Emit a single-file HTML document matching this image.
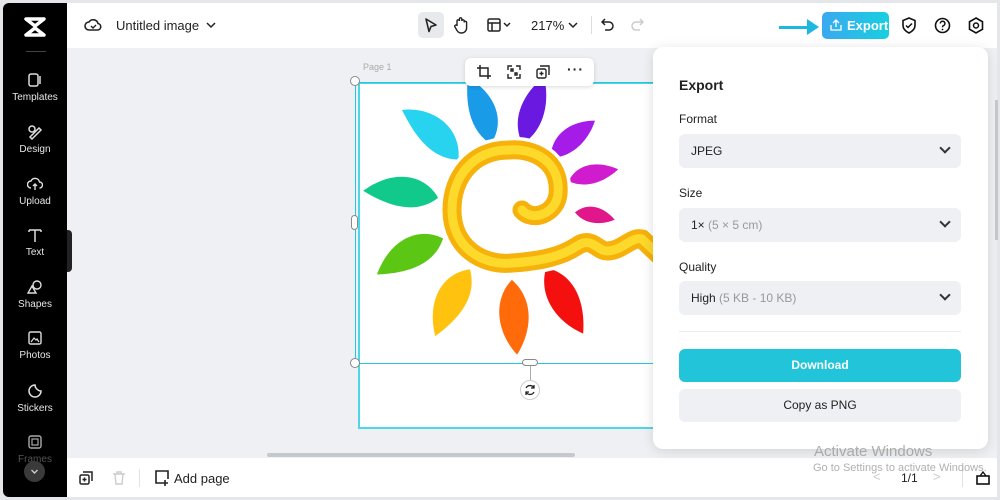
<!DOCTYPE html>
<html><head><meta charset="utf-8"><style>
*{margin:0;padding:0;box-sizing:border-box}
body{width:1000px;height:500px;overflow:hidden;background:#e4e6e9;font-family:"Liberation Sans",sans-serif;position:relative}
.abs{position:absolute}
#side{left:3px;top:3px;width:64px;height:494px;background:#000;border-radius:6px 0 0 6px}
.si{position:absolute;left:0;width:64px;text-align:center;color:#e6e6e6;font-size:10px}
.si svg{display:block;margin:0 auto 4px}
#top{left:67px;top:3px;width:930px;height:45px;background:#fff}
#canvas{left:67px;top:48px;width:930px;height:410px;background:#eef0f3}
#bot{left:67px;top:458px;width:930px;height:39px;background:#fff}
.sel{left:679px;width:282px;height:34px;background:#eef0f3;border-radius:6px;font-size:12px;color:#222;padding:0 12px;line-height:34px}
.sel span{color:#999}
.sel i{position:absolute;right:12px;width:8px;height:8px;border-right:2px solid #333;border-bottom:2px solid #333;transform:rotate(45deg);top:10px}
.lbl{left:679px;font-size:12px;color:#222}
</style></head><body>
<div id="side" class="abs">
 <svg class="abs" style="left:20px;top:13px" width="24" height="22" viewBox="0 0 24 22"><path d="M3 3h18l-9 7z M3 19h18l-9-7z" fill="none" stroke="#fff" stroke-width="3.5" stroke-linejoin="round"/></svg>
 <div class="abs" style="left:23px;top:48px;width:20px;height:1px;background:#444"></div>
 <div class="si" style="top:69px"><svg width="16" height="16"><rect x="2" y="2" width="9" height="12" rx="2" fill="none" stroke="#ddd" stroke-width="1.5"/><path d="M13 4v8" stroke="#ddd" stroke-width="1.5"/></svg>Templates</div>
 <div class="si" style="top:121px"><svg width="16" height="16"><circle cx="5" cy="5" r="3" fill="none" stroke="#ddd" stroke-width="1.5"/><path d="M3 13l9-9 2 2-9 9z" fill="none" stroke="#ddd" stroke-width="1.5"/></svg>Design</div>
 <div class="si" style="top:173px"><svg width="16" height="16"><path d="M4 12a3.5 3.5 0 0 1 0-7 4.5 4.5 0 0 1 8.5 1 3 3 0 0 1 0 6M8 14V8M6 10l2-2 2 2" fill="none" stroke="#ddd" stroke-width="1.4"/></svg>Upload</div>
 <div class="si" style="top:224px"><svg width="16" height="16"><path d="M2 3h12M8 3v12M2 3v2M14 3v2" fill="none" stroke="#ddd" stroke-width="1.5"/></svg>Text</div>
 <div class="si" style="top:276px"><svg width="16" height="16"><circle cx="10" cy="6" r="4" fill="none" stroke="#ddd" stroke-width="1.4"/><path d="M5 7l4 7H1z" fill="none" stroke="#ddd" stroke-width="1.4"/></svg>Shapes</div>
 <div class="si" style="top:327px"><svg width="16" height="16"><rect x="2" y="2" width="12" height="12" rx="1.5" fill="none" stroke="#ddd" stroke-width="1.4"/><path d="M4 12l3-4 2 2 1-1 2 3" fill="none" stroke="#ddd" stroke-width="1.2"/></svg>Photos</div>
 <div class="si" style="top:380px"><svg width="16" height="16"><path d="M14 8a6 6 0 1 1-6-6c0 3 3 6 6 6z" fill="none" stroke="#ddd" stroke-width="1.5"/></svg>Stickers</div>
 <div class="si" style="top:431px;color:#555"><svg width="16" height="16"><rect x="2" y="2" width="12" height="12" rx="2" fill="none" stroke="#aaa" stroke-width="1.4"/><rect x="5" y="5" width="6" height="6" fill="none" stroke="#aaa" stroke-width="1.2"/></svg>Frames</div>
 <div class="abs" style="left:21px;top:458px;width:21px;height:21px;border-radius:50%;background:#3a3a3a"><svg width="21" height="21"><path d="M7.5 9l3 3 3-3" fill="none" stroke="#ccc" stroke-width="1.4"/></svg></div>
</div>
<div id="top" class="abs">
 <svg class="abs" style="left:17px;top:14px" width="18" height="16"><path d="M5 13a4 4 0 0 1 0-8 5 5 0 0 1 9 1.5 3.3 3.3 0 0 1 0 6.5z" fill="none" stroke="#222" stroke-width="1.6"/><path d="M7 9l2 2 3-3" fill="none" stroke="#222" stroke-width="1.4"/></svg>
 <div class="abs" style="left:49px;top:15px;font-size:13px;color:#222">Untitled image</div>
 <svg class="abs" style="left:139px;top:18px" width="10" height="8"><path d="M1 2l4 4 4-4" fill="none" stroke="#222" stroke-width="1.5"/></svg>
 <div class="abs" style="left:351px;top:9px;width:26px;height:26px;border-radius:5px;background:#e7e9ed"></div>
 <svg class="abs" style="left:357px;top:14px" width="14" height="16"><path d="M2 2l10 6-5 1.5-2 5z" fill="none" stroke="#222" stroke-width="1.6" stroke-linejoin="round"/></svg>
 <svg class="abs" style="left:386px;top:13px" width="16" height="18"><path d="M4 10V5a1.2 1.2 0 0 1 2.4 0V3a1.2 1.2 0 0 1 2.4 0v2a1.2 1.2 0 0 1 2.4 0v1.5a1.2 1.2 0 0 1 2.4 0V12a5 5 0 0 1-5 5H8c-2 0-3-1-4-2.5L2 11a1.2 1.2 0 0 1 2-1.5z" fill="none" stroke="#222" stroke-width="1.4"/></svg>
 <svg class="abs" style="left:420px;top:15px" width="28" height="14"><rect x="1" y="1" width="12" height="12" rx="1.5" fill="none" stroke="#222" stroke-width="1.5"/><path d="M1 5h12M5 5v8M17 5l3 3 3-3" fill="none" stroke="#222" stroke-width="1.5"/></svg>
 <div class="abs" style="left:464px;top:15px;font-size:13px;color:#222">217%</div>
 <svg class="abs" style="left:501px;top:18px" width="10" height="8"><path d="M1 2l4 4 4-4" fill="none" stroke="#222" stroke-width="1.5"/></svg>
 <div class="abs" style="left:524px;top:13px;width:1px;height:18px;background:#ddd"></div>
 <svg class="abs" style="left:534px;top:14px" width="14" height="14"><path d="M4 2L1 5l3 3M1 5h7a4 4 0 0 1 0 8H4" fill="none" stroke="#222" stroke-width="1.5"/></svg>
 <svg class="abs" style="left:563px;top:14px" width="14" height="14"><path d="M10 2l3 3-3 3M13 5H6a4 4 0 0 0 0 8h4" fill="none" stroke="#ccc" stroke-width="1.5"/></svg>
 <div class="abs" style="left:712px;top:23px;width:36px;height:3px;background:#1cb8e0"></div>
 <svg class="abs" style="left:740px;top:16px" width="12" height="16"><path d="M0 0l12 8-12 8z" fill="#1cb8e0"/></svg>
 <div class="abs" style="left:755px;top:9px;width:67px;height:27px;border-radius:5px;background:linear-gradient(90deg,#3ba9ef,#18cfe0);color:#fff;font-size:13px;font-weight:bold;line-height:27px;padding-left:25px">Export</div>
 <svg class="abs" style="left:763px;top:16px" width="12" height="12"><path d="M6 8V1M3 4l3-3 3 3M1 6v5h10V6" fill="none" stroke="#fff" stroke-width="1.3"/></svg>
 <svg class="abs" style="left:834px;top:14px" width="16" height="17"><path d="M8 1l6 2.5v5c0 4-3 6-6 7.5-3-1.5-6-3.5-6-7.5v-5z" fill="none" stroke="#111" stroke-width="1.6"/><path d="M5 8.5l2 2 4-4" fill="none" stroke="#111" stroke-width="1.5"/></svg>
 <svg class="abs" style="left:867px;top:14px" width="17" height="17"><circle cx="8.5" cy="8.5" r="7" fill="none" stroke="#111" stroke-width="1.6"/><path d="M6.3 6.5a2.3 2.3 0 1 1 3 2.2c-.6.3-.8.7-.8 1.5" fill="none" stroke="#111" stroke-width="1.5"/><circle cx="8.5" cy="12.5" r=".9" fill="#111"/></svg>
 <svg class="abs" style="left:901px;top:14px" width="16" height="17"><path d="M8 1l6.5 3.75v7.5L8 16l-6.5-3.75v-7.5z" fill="none" stroke="#111" stroke-width="1.6"/><circle cx="8" cy="8.5" r="2.5" fill="none" stroke="#111" stroke-width="1.5"/></svg>
</div>
<div id="canvas" class="abs"></div>
<div class="abs" style="left:67px;top:230px;width:5px;height:42px;background:#222;border-radius:0 4px 4px 0"></div>
<div class="abs" style="left:363px;top:62px;font-size:9px;color:#aaa">Page 1</div>
<div class="abs" style="left:358px;top:82px;width:300px;height:347px;background:#fff;border:2px solid #4dd6e8"></div>
<div class="abs" style="left:355px;top:82px;width:305px;height:282px;border:1.5px solid #25c6dc;border-right:none"></div>
<svg class="abs" style="left:358px;top:84px" width="297" height="276" viewBox="358 84 297 276">
 <g>
 <g transform="translate(507,210) rotate(-44)"><path d="M0,-70 C24,-90 20,-125 -6,-145 C-14,-120 -20,-90 0,-70Z" fill="#27d3ee"/></g>
 <g transform="translate(507,210) rotate(-14)"><path d="M0,-68 C20,-85 18,-115 -6,-138 C-14,-115 -18,-88 0,-68Z" fill="#1a9be8"/></g>
 <g transform="translate(507,210) rotate(13)"><path d="M0,-68 C18,-85 18,-115 6,-138 C-12,-115 -16,-88 0,-68Z" fill="#6a1ae0"/></g>
 <g transform="translate(507,210) rotate(40)"><path d="M0,-68 C16,-82 18,-105 10,-125 C-10,-108 -14,-85 0,-68Z" fill="#a51be8"/></g>
 <g transform="translate(507,210) rotate(65)"><path d="M0,-68 C14,-80 16,-100 10,-118 C-8,-102 -12,-82 0,-68Z" fill="#d11bcf"/></g>
 <g transform="translate(507,210) rotate(92)"><path d="M0,-68 C12,-78 12,-95 6,-108 C-8,-95 -10,-80 0,-68Z" fill="#e0168a"/></g>
 <g transform="translate(507,210) rotate(146)"><path d="M0,-70 C22,-88 22,-120 6,-145 C-14,-120 -20,-90 0,-70Z" fill="#f51010"/></g>
 <g transform="translate(507,210) rotate(176)"><path d="M0,-70 C20,-88 20,-120 0,-145 C-18,-120 -20,-90 0,-70Z" fill="#ff6a0a"/></g>
 <g transform="translate(507,210) rotate(-148)"><path d="M0,-70 C22,-88 20,-120 -6,-145 C-16,-120 -22,-90 0,-70Z" fill="#ffc20e"/></g>
 <g transform="translate(507,210) rotate(-114)"><path d="M0,-70 C22,-88 20,-120 -6,-145 C-16,-120 -22,-90 0,-70Z" fill="#5cc615"/></g>
 <g transform="translate(507,210) rotate(-80)"><path d="M0,-70 C22,-88 20,-120 -6,-145 C-16,-120 -22,-90 0,-70Z" fill="#10c98a"/></g>
 </g>
 <path d="M522,210 C532,222 556,214 558,194 C561,160 532,148 509,150 C472,150 452,178 452,210 C452,247 482,266 512,263 C542,261 562,256 577,246 C592,236 597,251 607,251 C622,251 632,236 642,239 L662,258" fill="none" stroke="#fff" stroke-width="26" stroke-linecap="round"/>
 <path d="M522,210 C532,222 556,214 558,194 C561,160 532,148 509,150 C472,150 452,178 452,210 C452,247 482,266 512,263 C542,261 562,256 577,246 C592,236 597,251 607,251 C622,251 632,236 642,239 L662,258" fill="none" stroke="#f6b10a" stroke-width="19" stroke-linecap="round"/>
 <path d="M522,210 C532,222 556,214 558,194 C561,160 532,148 509,150 C472,150 452,178 452,210 C452,247 482,266 512,263 C542,261 562,256 577,246 C592,236 597,251 607,251 C622,251 632,236 642,239 L662,258" fill="none" stroke="#fcd92a" stroke-width="9" stroke-linecap="round"/>
</svg>
<div class="abs" style="left:350px;top:76px;width:10px;height:10px;border-radius:50%;background:#fff;border:1px solid #888"></div>
<div class="abs" style="left:350px;top:358px;width:10px;height:10px;border-radius:50%;background:#fff;border:1px solid #888"></div>
<div class="abs" style="left:351px;top:215px;width:7px;height:15px;border-radius:4px;background:#fff;border:1px solid #888"></div>
<div class="abs" style="left:522px;top:359px;width:16px;height:7px;border-radius:4px;background:#fff;border:1px solid #888"></div>
<div class="abs" style="left:530px;top:366px;width:1px;height:14px;background:#aaa"></div>
<div class="abs" style="left:520px;top:380px;width:20px;height:20px;border-radius:50%;background:#fff;border:1px solid #ccc"><svg width="18" height="18"><path d="M13 7a4.5 4.5 0 0 0-8 0M5 11a4.5 4.5 0 0 0 8 0M13 4v3h-3M5 14v-3h3" fill="none" stroke="#222" stroke-width="1.3"/></svg></div>
<div class="abs" style="left:465px;top:58px;width:129px;height:28px;background:#fff;border-radius:6px;box-shadow:0 1px 4px rgba(0,0,0,.15)">
 <svg class="abs" style="left:12px;top:7px" width="14" height="14"><path d="M3 0v11h11M0 3h11v11" fill="none" stroke="#222" stroke-width="1.5"/></svg>
 <svg class="abs" style="left:42px;top:7px" width="14" height="14"><path d="M1 5V1h4M9 1h4v4M13 9v4H9M5 13H1V9M4 4h2v2H4zM8 8h2v2H8z" fill="none" stroke="#222" stroke-width="1.4"/></svg>
 <svg class="abs" style="left:71px;top:7px" width="14" height="14"><rect x="1" y="4" width="9" height="9" rx="1.5" fill="none" stroke="#222" stroke-width="1.4"/><path d="M4 1h9v9M5.5 6.5v4M3.5 8.5h4" fill="none" stroke="#222" stroke-width="1.4"/></svg>
 <div class="abs" style="left:102px;top:3px;font-size:14px;font-weight:bold;color:#222;letter-spacing:1px">···</div>
</div>
<div class="abs" style="left:267px;top:453px;width:308px;height:4px;border-radius:2px;background:#c5c8cc"></div>
<div class="abs" style="left:995px;top:100px;width:3px;height:140px;background:#c5c8cc"></div>
<div id="bot" class="abs">
 <svg class="abs" style="left:12px;top:13px" width="14" height="14"><rect x="1" y="4" width="9" height="9" rx="1.5" fill="none" stroke="#222" stroke-width="1.5"/><path d="M4 1h9v9M5.5 6.5v4M3.5 8.5h4" fill="none" stroke="#222" stroke-width="1.5"/></svg>
 <svg class="abs" style="left:45px;top:13px" width="14" height="14"><path d="M1 3h12M5 3V1h4v2M3 3l1 10h6l1-10" fill="none" stroke="#ccc" stroke-width="1.4"/></svg>
 <div class="abs" style="left:72px;top:11px;width:1px;height:18px;background:#e2e2e2"></div>
 <svg class="abs" style="left:87px;top:12px" width="16" height="16"><path d="M10 13H2V1h12v8M11 10v6M8 13h6" fill="none" stroke="#222" stroke-width="1.6"/></svg>
 <div class="abs" style="left:107px;top:13px;font-size:13px;color:#222">Add page</div>
 <div class="abs" style="left:806px;top:11px;font-size:13px;color:#ccc">&lt;</div>
 <div class="abs" style="left:834px;top:13px;font-size:12px;color:#222">1/1</div>
 <div class="abs" style="left:866px;top:11px;font-size:13px;color:#ccc">&gt;</div>
 <div class="abs" style="left:895px;top:11px;width:1px;height:18px;background:#e2e2e2"></div>
 <svg class="abs" style="left:908px;top:12px" width="16" height="16"><rect x="2" y="6" width="12" height="8" fill="none" stroke="#111" stroke-width="1.6"/><path d="M5 6l3-4 3 4" fill="none" stroke="#111" stroke-width="1.4"/></svg>
</div>
<div class="abs" style="left:653px;top:47px;width:335px;height:402px;background:#fff;border-radius:10px;box-shadow:0 2px 12px rgba(0,0,0,.12)"></div>
<div class="abs" style="left:679px;top:77px;font-size:14px;font-weight:bold;color:#222">Export</div>
<div class="abs lbl" style="top:112px">Format</div>
<div class="abs sel" style="top:134px">JPEG<i></i></div>
<div class="abs lbl" style="top:186px">Size</div>
<div class="abs sel" style="top:208px">1× <span>(5 × 5 cm)</span><i></i></div>
<div class="abs lbl" style="top:260px">Quality</div>
<div class="abs sel" style="top:281px">High <span>(5 KB - 10 KB)</span><i></i></div>
<div class="abs" style="left:679px;top:331px;width:282px;height:1px;background:#ececec"></div>
<div class="abs" style="left:679px;top:349px;width:282px;height:33px;background:#21c4d9;border-radius:6px;color:#fff;font-size:12px;font-weight:bold;text-align:center;line-height:33px">Download</div>
<div class="abs" style="left:679px;top:389px;width:282px;height:33px;background:#eef0f3;border-radius:6px;color:#222;font-size:12px;text-align:center;line-height:33px">Copy as PNG</div>
<div class="abs" style="left:814px;top:443px;font-size:15px;color:rgba(150,150,150,.75)">Activate Windows</div>
<div class="abs" style="left:813px;top:462px;font-size:11px;color:rgba(150,150,150,.75)">Go to Settings to activate Windows.</div>
</body></html>
